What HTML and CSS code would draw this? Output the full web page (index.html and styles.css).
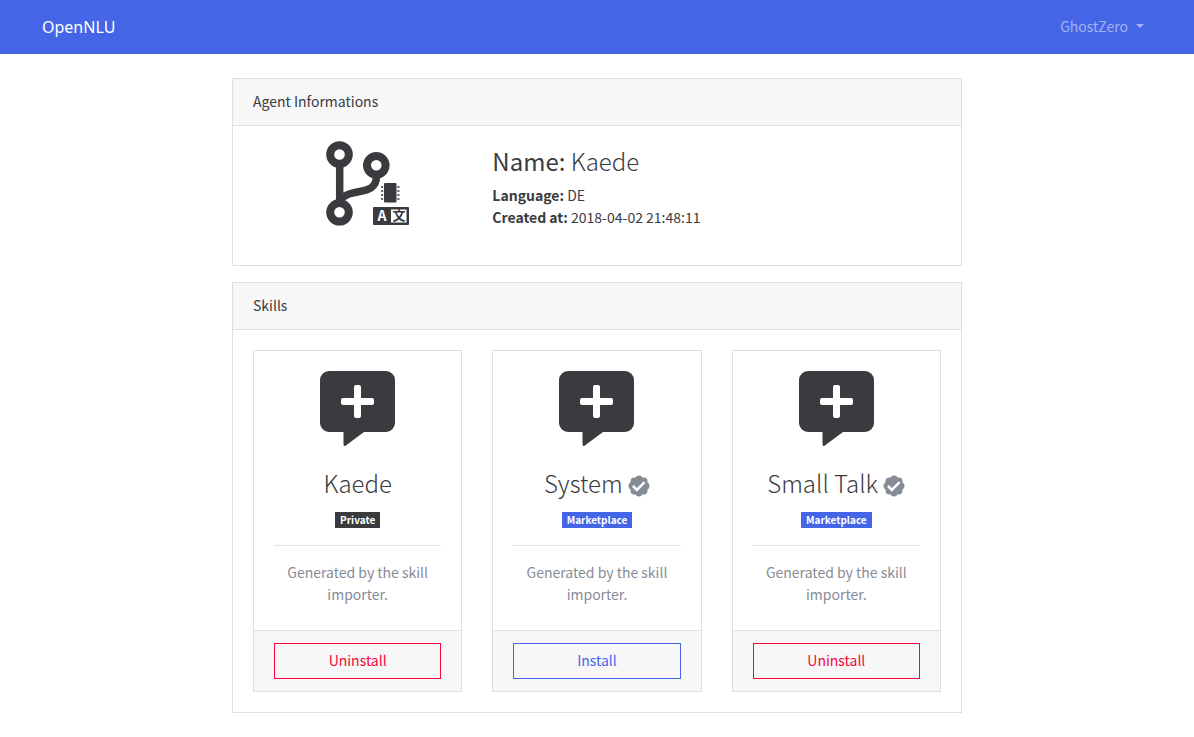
FILE: index.html
```html
<!DOCTYPE html>
<html lang="en">
<head>
<meta charset="utf-8">
<meta name="viewport" content="width=device-width, initial-scale=1">
<title>OpenNLU</title>
<link rel="stylesheet" href="styles.css">
</head>
<body>
<svg class="sprite" aria-hidden="true">
  <symbol id="comment-plus" viewBox="0 0 75 75">
    <path fill-rule="evenodd" d="M9 0H66a9 9 0 0 1 9 9V52a9 9 0 0 1-9 9H44L25.500 74.700Q23.500 75.500 23.500 73V61H9a9 9 0 0 1-9-9V9a9 9 0 0 1 9-9ZM36 14Q34 14 34 16V27H23Q21 27 21 29V32Q21 34 23 34H34V45Q34 47 36 47H39Q41 47 41 45V34H52Q54 34 54 32V29Q54 27 52 27H41V16Q41 14 39 14Z"/>
  </symbol>
  <symbol id="verified" viewBox="0 0 22 22">
    <circle cx="11" cy="11" r="8.800"/>
    <circle cx="11" cy="4.200" r="3.700"/><circle cx="15.800" cy="6.200" r="3.700"/>
    <circle cx="17.800" cy="11" r="3.700"/><circle cx="15.800" cy="15.800" r="3.700"/>
    <circle cx="11" cy="17.800" r="3.700"/><circle cx="6.200" cy="15.800" r="3.700"/>
    <circle cx="4.200" cy="11" r="3.700"/><circle cx="6.200" cy="6.200" r="3.700"/>
    <path d="M5 11l3.900 3.900 7.700-7.700" fill="none" stroke="#fff" stroke-width="2.600"/>
  </symbol>
</svg>

<header class="navbar">
  <a class="brand" href="#">OpenNLU</a>
  <button class="user-menu" type="button" aria-haspopup="true">GhostZero<span class="caret"></span></button>
</header>

<main class="page">
  <section class="card">
    <h2 class="card-header">Agent Informations</h2>
    <div class="card-body columns">
      <div class="agent-figure">
        <svg class="agent-icon" viewBox="0 0 84 86" aria-hidden="true">
          <g fill="none" stroke="#3a3b3f">
            <circle cx="13.500" cy="13.500" r="9.300" stroke-width="8"/>
            <circle cx="50.300" cy="24.300" r="9.300" stroke-width="8"/>
            <circle cx="13.500" cy="71.300" r="9.300" stroke-width="8"/>
            <path d="M13.700 24V62M50.500 35C50.500 57 23 45 14 60" stroke-width="7.500"/>
            <path d="M55 46h2.200M55 50h2.200M55 54h2.200M55 58h2.200M71.300 46h2.200M71.300 50h2.200M71.300 54h2.200M71.300 58h2.200" stroke-width="1.600"/>
          </g>
          <rect x="58" y="42" width="12.500" height="19.500" rx="1"/>
          <rect x="47" y="66" width="36" height="18" rx="1"/>
          <rect x="65" y="68.500" width="15.500" height="13" fill="#fff"/>
          <text class="lang-glyph lang-latin" x="56" y="80">A</text>
          <text class="lang-glyph lang-han" x="73" y="79">文</text>
        </svg>
      </div>
      <div class="agent-details">
        <h1 class="title"><span class="title-label">Name:</span> Kaede</h1>
        <p class="detail"><strong>Language:</strong> DE</p>
        <p class="detail"><strong>Created at:</strong> 2018-04-02 21:48:11</p>
      </div>
    </div>
  </section>

  <section class="card">
    <h2 class="card-header">Skills</h2>
    <div class="card-body columns">
      <article class="card skill">
        <div class="skill-body">
          <svg class="skill-icon" aria-hidden="true"><use href="#comment-plus"/></svg>
          <h3 class="title skill-title">Kaede</h3>
          <span class="badge badge-dark">Private</span>
          <hr class="rule">
          <p class="description">Generated by the skill importer.</p>
        </div>
        <div class="skill-footer"><button class="btn btn-danger" type="button">Uninstall</button></div>
      </article>
      <article class="card skill">
        <div class="skill-body">
          <svg class="skill-icon" aria-hidden="true"><use href="#comment-plus"/></svg>
          <h3 class="title skill-title">System <svg class="verified-icon" role="img" aria-label="Verified"><use href="#verified"/></svg></h3>
          <span class="badge">Marketplace</span>
          <hr class="rule">
          <p class="description">Generated by the skill importer.</p>
        </div>
        <div class="skill-footer"><button class="btn" type="button">Install</button></div>
      </article>
      <article class="card skill">
        <div class="skill-body">
          <svg class="skill-icon" aria-hidden="true"><use href="#comment-plus"/></svg>
          <h3 class="title skill-title">Small Talk <svg class="verified-icon" role="img" aria-label="Verified"><use href="#verified"/></svg></h3>
          <span class="badge">Marketplace</span>
          <hr class="rule">
          <p class="description">Generated by the skill importer.</p>
        </div>
        <div class="skill-footer"><button class="btn btn-danger" type="button">Uninstall</button></div>
      </article>
    </div>
  </section>
</main>
</body>
</html>
```
FILE: styles.css
```css
* { box-sizing: border-box; }

body {
  margin: 0;
  background: #fff;
  color: #3a3b3f;
  font-family: "Noto Sans CJK JP", "Noto Sans CJK SC", sans-serif;
  font-size: 14px;
  line-height: 22px;
}

h1, h2, h3, p { margin: 0; }

.sprite { position: absolute; width: 0; height: 0; }

.navbar {
  display: flex;
  align-items: center;
  justify-content: space-between;
  min-height: 54px;
  padding: 0 50px 0 42px;
  background: #4466e6;
}

.brand {
  color: #fff;
  font-family: "Noto Sans", sans-serif;
  font-size: 16px;
  text-decoration: none;
}

.user-menu {
  display: flex;
  align-items: center;
  gap: 8px;
  padding: 0 0 2px;
  border: 0;
  background: none;
  color: rgba(255, 255, 255, 0.5);
  font: inherit;
}

.caret {
  border-top: 4px solid;
  border-left: 4px solid transparent;
  border-right: 4px solid transparent;
}

.page {
  display: flex;
  flex-direction: column;
  gap: 16px;
  max-width: 762px;
  margin: 0 auto;
  padding: 24px 16px;
}

.card {
  border: 1px solid #dfdfdf;
  background: #fff;
}

.card-header {
  padding: 11px 20px 13px;
  border-bottom: 1px solid #dfdfdf;
  background: #f7f7f7;
  font-size: 14px;
  font-weight: 400;
  line-height: 22px;
}

.card-body { padding: 20px; }

.columns {
  display: grid;
  grid-template-columns: repeat(3, minmax(0, 1fr));
  gap: 30px;
}

.agent-figure {
  display: flex;
  justify-content: center;
  margin-top: -5px;
  padding-left: 20px;
}

.agent-icon { width: 84px; height: 86px; fill: #3a3b3f; }

.lang-glyph { font-weight: 700; text-anchor: middle; }
.lang-latin { fill: #fff; font-size: 14px; }
.lang-han { fill: #3a3b3f; font-size: 13px; }

.agent-details { grid-column: span 2; padding-bottom: 17px; }

.title {
  margin-bottom: 8px;
  font-size: 24px;
  font-weight: 300;
  line-height: 30px;
}

.title-label { font-weight: 400; }

.skill { display: flex; flex-direction: column; }

.skill-body {
  flex: 1;
  padding: 20px 20px 25px;
  text-align: center;
}

.skill-icon {
  display: block;
  width: 75px;
  height: 75px;
  margin: 0 auto 22px;
  fill: #3a3b3f;
}

.skill-title { margin-bottom: 14px; }

.verified-icon {
  width: 22px;
  height: 22px;
  fill: #868c96;
  vertical-align: -4px;
}

.badge {
  display: block;
  width: fit-content;
  margin: 0 auto;
  padding: 0 5px;
  background: #4466e6;
  color: #fff;
  font-size: 10px;
  font-weight: 700;
  line-height: 16px;
}

.badge-dark { background: #3a3b3f; }

.rule {
  margin: 17px 0 15px;
  border: 0;
  border-top: 1px solid #e3e3e3;
}

.description { color: #868c96; }

.skill-footer {
  padding: 12px 20px;
  border-top: 1px solid #dfdfdf;
  background: #f7f7f7;
}

.btn {
  display: block;
  width: 100%;
  padding: 5px 12px 7px;
  border: 1px solid #4466e6;
  background: transparent;
  color: #4466e6;
  font: inherit;
}

.btn-danger { border-color: #f8063c; color: #f8063c; }
```
